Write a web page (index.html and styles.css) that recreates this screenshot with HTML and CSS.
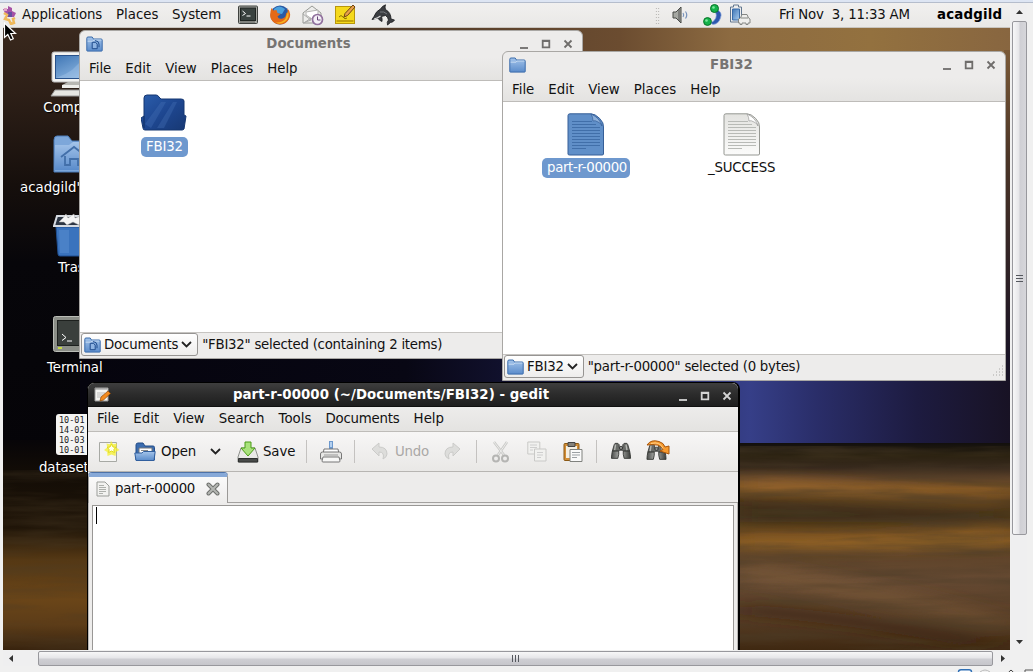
FILE: index.html
```
<!DOCTYPE html>
<html lang="en">
<head>
<meta charset="utf-8">
<title>Desktop</title>
<link rel="stylesheet" href="styles.css">
</head>
<body>
<svg class="defs" aria-hidden="true">
  <defs>
    <linearGradient id="gFolder" x1="0" y1="0" x2="0" y2="1"><stop offset="0" stop-color="#a4c4ea"/><stop offset="1" stop-color="#5b8ccb"/></linearGradient>
    <linearGradient id="gDark" x1="0" y1="0" x2="1" y2="1"><stop offset="0" stop-color="#2b5eac"/><stop offset=".5" stop-color="#1e4791"/><stop offset="1" stop-color="#173873"/></linearGradient>
    <linearGradient id="gScreen" x1="0" y1="0" x2="1" y2="1"><stop offset="0" stop-color="#3f76b5"/><stop offset="1" stop-color="#a9cdf0"/></linearGradient>
    <linearGradient id="gPaper" x1="0" y1="0" x2="0" y2="1"><stop offset="0" stop-color="#e3e3e0"/><stop offset="1" stop-color="#fbfbfa"/></linearGradient>
    <linearGradient id="gTube" x1="0" y1="0" x2="1" y2="0"><stop offset="0" stop-color="#4a4c4a"/><stop offset=".45" stop-color="#b4b6b2"/><stop offset="1" stop-color="#3b3d3a"/></linearGradient>
  </defs>
  <symbol id="folder" viewBox="0 0 17 16">
    <path d="M.8 14.500V2.200Q.8 1 2 1h4.200l1.300 2h7.600q1.100 0 1.100 1.100v10.400q0 .6-.6.6H1.400q-.6 0-.6-.6z" fill="url(#gFolder)" stroke="#3b6cab"/>
    <path d="M1.600 5.200H7l1-1.200h7.400" fill="none" stroke="#d3e3f6" stroke-width=".8"/>
  </symbol>
  <symbol id="folder-doc" viewBox="0 0 17 16">
    <use href="#folder"/>
    <path d="M6.200 6.300h3.300l1.700 1.800v4.600h-5z" fill="#8fb5e3" stroke="#1f4c8d"/>
    <path d="M9 4.600q4 .2 4 3.600v3" fill="none" stroke="#1f4c8d"/>
  </symbol>
  <symbol id="binoculars" viewBox="0 0 24 22">
    <path d="M4.500 3l1-1.500h3L10 3v3h4V3l1.500-1.500h3l1 1.500 2 7h-7l-1-1h-3l-1 1h-7z" fill="#6a6c69" stroke="#3a3c39"/>
    <path d="M2.500 10h7v3.500l-1 4.500h-7l.3-4zM14.500 10h7l.7 4 .3 4h-7l-1-4.500z" fill="url(#gTube)" stroke="#343633"/>
    <path d="M6 3l-1 6M17.500 3l1 6" stroke="#b5b7b3" fill="none" stroke-width="1.500"/>
    <circle cx="12" cy="6.500" r="1.800" fill="#8f918d" stroke="#333"/>
  </symbol>
</svg>

<div class="viewer">
  <main class="desktop">
    <svg class="wallpaper" viewBox="3 3 1007 647" preserveAspectRatio="none">
      <defs>
        <filter id="soft" x="-20%" y="-50%" width="140%" height="200%"><feGaussianBlur stdDeviation="18 6"/></filter>
        <filter id="grain" x="0" y="0" width="100%" height="100%"><feTurbulence type="fractalNoise" baseFrequency=".008 .09" numOctaves="4" seed="8"/><feColorMatrix values="0 0 0 0 .07  0 0 0 0 .045  0 0 0 0 .02  2.4 0 0 0 -.9"/></filter>
        <linearGradient id="sky" x1="0" y1="0" x2="0" y2="1"><stop offset="0" stop-color="#3e2c20"/><stop offset=".14" stop-color="#2d1f17"/><stop offset=".28" stop-color="#160f0c"/><stop offset=".4" stop-color="#07060a"/><stop offset="1" stop-color="#030206"/></linearGradient>
        <linearGradient id="top" x1="0" y1="0" x2="1" y2="0"><stop offset="0" stop-color="#3c2b1f"/><stop offset=".3" stop-color="#4d3827"/><stop offset=".58" stop-color="#6b4c30"/><stop offset=".7" stop-color="#8d6b41"/><stop offset=".85" stop-color="#93713f"/><stop offset="1" stop-color="#886640"/></linearGradient>
        <linearGradient id="edge" x1="0" y1="0" x2="0" y2="1"><stop offset="0" stop-color="#7a5937"/><stop offset=".35" stop-color="#4b3527"/><stop offset="1" stop-color="#181224"/></linearGradient>
        <linearGradient id="blue" x1="0" y1="0" x2="1" y2="0"><stop offset="0" stop-color="#05040d"/><stop offset=".35" stop-color="#080714"/><stop offset=".48" stop-color="#131333"/><stop offset=".72" stop-color="#363f88"/><stop offset=".79" stop-color="#2a2e6a"/><stop offset=".9" stop-color="#1d1b40"/><stop offset="1" stop-color="#181224"/></linearGradient>
        <linearGradient id="ground" x1="0" y1="0" x2="0" y2="1">
          <stop offset="0" stop-color="#120f0d"/><stop offset=".06" stop-color="#2b2211"/><stop offset=".12" stop-color="#37291d"/><stop offset=".17" stop-color="#5e4229"/><stop offset=".22" stop-color="#7e5422"/><stop offset=".28" stop-color="#4f3718"/><stop offset=".36" stop-color="#4c371b"/><stop offset=".44" stop-color="#744d1f"/><stop offset=".48" stop-color="#7d5420"/><stop offset=".53" stop-color="#5e4328"/><stop offset=".66" stop-color="#664a33"/><stop offset=".85" stop-color="#583d25"/><stop offset="1" stop-color="#3f2811"/>
        </linearGradient>
        <linearGradient id="leftground" x1="0" y1="0" x2="0" y2="1"><stop offset="0" stop-color="#070508"/><stop offset=".15" stop-color="#120c06"/><stop offset=".42" stop-color="#201508"/><stop offset=".57" stop-color="#553814"/><stop offset=".76" stop-color="#6a4518"/><stop offset=".88" stop-color="#5c3c18"/><stop offset="1" stop-color="#38230e"/></linearGradient>
      </defs>
      <rect x="3" y="3" width="1007" height="647" fill="url(#sky)"/>
      <rect x="80" y="3" width="930" height="60" fill="url(#top)"/>
      <rect x="1004" y="50" width="6" height="310" fill="url(#edge)"/>
      <rect x="80" y="355" width="930" height="88" fill="url(#blue)"/>
      <rect x="735" y="443" width="275" height="207" fill="url(#ground)"/>
      <rect x="3" y="440" width="90" height="210" fill="url(#leftground)"/>
      <g filter="url(#soft)">
        <path d="M735 476Q830 480 900 488T1010 492V502Q880 500 735 490z" fill="#9c6a2e" opacity=".7"/>
        <path d="M735 502Q840 505 1010 514V520Q860 524 735 522z" fill="#33240f" opacity=".6"/>
        <path d="M735 538Q880 540 1010 526V546Q860 552 735 549z" fill="#966626" opacity=".75"/>
        <path d="M735 560Q880 580 1010 620V632Q860 600 735 580z" fill="#7d5b3a" opacity=".55"/>
        <path d="M735 604Q860 610 1010 645H960Q840 622 735 615z" fill="#3a230f" opacity=".7"/>
      </g>
      <rect x="735" y="446" width="275" height="204" filter="url(#grain)" opacity=".5"/>
      <rect x="3" y="470" width="90" height="180" filter="url(#grain)" opacity=".35"/>
    </svg>

    <header class="panel">
      <nav class="panel-menu">
        <svg class="distro" width="14" height="20" viewBox="0 0 14 20"><path d="M0 4h5V1l4 2v3l4 2-2 4H4z" fill="#a552a6"/><path d="M5 7h4v5H5z" fill="#674fa0"/><path d="M1 8l3 2-2 4 4 1 2 4 3-1-1-4 2-1" stroke="#f0b95a" stroke-width="2.500" fill="none"/><path d="M1 3h3v3H1z" fill="#e3a8c8"/></svg>
        <span class="m-app">Applications</span><span class="m-pla">Places</span><span class="m-sys">System</span>
      </nav>
      <div class="launchers">
        <svg width="22" height="20" viewBox="0 0 22 20"><rect x="1.500" y="1" width="19" height="17.500" rx="1" fill="#a5a7a2" stroke="#3f423f"/><rect x="3.500" y="3" width="15" height="12.500" fill="#39423f" stroke="#202522"/><path d="M5.500 6l3 2.500-3 2M9.500 11h4" stroke="#fff" fill="none"/><path d="M3 17h15" stroke="#5a5c58"/></svg>
        <svg width="22" height="22" viewBox="0 0 22 22"><circle cx="11" cy="11" r="9.500" fill="#2a5aa5"/><path d="M5 5q5-5 11 0l-3 5-8-1z" fill="#4aa0dd"/><path d="M2.500 4l2 2.500 3-.5 1 3 3 1-3 2.500q1 3 5 2 4-1 3.500-6l2 2-.5-6q4 4 2 9.500-3 6.500-9.500 6.500T1.500 14Q.5 9 2.500 4z" fill="#e66a17"/><path d="M19 7q2.500 7-3.500 11-5 3-9 .5 7 .5 10-4z" fill="#f6b321"/></svg>
        <svg width="24" height="22" viewBox="0 0 24 22"><path d="M2 9l9-7 9 7v10H2z" fill="#ededeb" stroke="#989a96"/><path d="M5 8l12-2v7l-6 2-6-4z" fill="#fff" stroke="#b5b5b3"/><path d="M2 10l8 6-8 3M3 19l7-5" stroke="#aaa" fill="none"/><circle cx="16.500" cy="15.500" r="5" fill="#f4eff6" stroke="#90709d" stroke-width="1.700"/><path d="M16.500 12.500v3.500h3" stroke="#66477a" fill="none"/></svg>
        <svg width="22" height="22" viewBox="0 0 22 22"><rect x="0.500" y="2.500" width="19" height="17" fill="#f5d91c" stroke="#b8970b"/><path d="M1.500 17h17" stroke="#c4a30b" stroke-width="2"/><path d="M4 13q2-3 4 0t4 1" stroke="#8c7300" fill="none"/><path d="M9 13l1-3.500L18 1l2 2-7.500 8.500z" fill="#e8a04b" stroke="#6d4314"/></svg>
        <svg class="dolphin" width="24" height="22" viewBox="0 0 24 22"><path d="M1 15.500l2-3Q5 7 9.500 5 11 2 14.500.8 13.500 3 14.500 5.500 20 8.500 20 15l3.500 1q-1.500 2.500-4 2.500L16.500 21q-1-3 1-5-.5-3-3-4.500l-4 1q1 3 .5 5-3-1-4-3.500z" fill="#3b3d41" stroke="#17181a" stroke-width=".8"/><path d="M3 15q4-1 6.500-3" stroke="#d9d9d9" fill="none" stroke-width="1.200"/><path d="M9 8q4-1 7 2" stroke="#777a80" fill="none"/></svg>
      </div>
      <div class="tray">
        <span class="grip"></span>
        <svg class="vol" width="18" height="20" viewBox="0 0 18 20"><path d="M1 7h3l5-5v16l-5-5H1z" fill="#a5a7a2" stroke="#464845"/><path d="M7 4v12" stroke="#555"/><path d="M11 8q1.500 2 0 4M13.500 6.500q2.500 3.500 0 7" stroke="#7792bb" fill="none" stroke-width="1.200"/></svg>
        <svg class="net" width="20" height="22" viewBox="0 0 20 22"><path d="M13 5q7 3 4.500 9-2 6-7.500 6.500l-2.500-1.500q8-4 5-11z" fill="#2e58ad" stroke="#8aa6dc" stroke-width=".7"/><circle cx="11.500" cy="4.500" r="4" fill="#14b24a" stroke="#087527"/><circle cx="4.500" cy="17.500" r="3.900" fill="#14b24a" stroke="#087527"/><circle cx="10.500" cy="3.500" r="1.300" fill="#7bea9b"/><circle cx="3.500" cy="16.500" r="1.300" fill="#7bea9b"/></svg>
        <svg class="bat" width="22" height="22" viewBox="0 0 22 22"><path d="M4.500 1h5v2h3v15h-11V3h3z" fill="#eee" stroke="#62778f"/><path d="M3.500 5h7v11h-7z" fill="url(#gScreen)" stroke="#386ba8"/><path d="M9.500 19v-4l2-1 1.500-3.500h5L19.500 14l1.500 1v4h-2v1.500h-2V19h-4v1.500h-2V19z" fill="#efefed" stroke="#858784"/><path d="M12 14h7" stroke="#858784"/></svg>
        <span class="clock">Fri Nov&nbsp; 3, 11:33 AM</span>
        <b class="user">acadgild</b>
      </div>
    </header>

    <div class="launcher-icon at-computer">
      <svg width="60" height="50" viewBox="0 0 60 50"><rect x="2" y="2" width="56" height="30" rx="2" fill="#f3f3f1" stroke="#bbb"/><rect x="5.500" y="5.500" width="49" height="23" fill="url(#gScreen)" stroke="#28518a"/><path d="M6 28Q25 22 34 6H54V28z" fill="#b9d5f2" opacity=".3"/><path d="M18 32h26v3H12z" fill="#b8b8b3"/><path d="M12 35h36v3H12z" fill="#eeeeeb"/><path d="M5 40h50l4 6H1z" fill="#e6e6e2" stroke="#999"/></svg>
      <span>Computer</span>
    </div>
    <div class="launcher-icon at-home">
      <svg width="46" height="40" viewBox="0 0 46 40"><path d="M1 37V5q0-4 3-4h11l4 5h24q2 0 2 2v29z" fill="#7da7da" stroke="#4c7db9"/><path d="M2 10h14l4-3h24v28H2z" fill="url(#gFolder)"/><path d="M8 22l13-10 13 10M12 21v9h5v-6h8v6h5v-9" stroke="#426fa9" stroke-width="1.800" fill="none"/></svg>
      <span>acadgild's Home</span>
    </div>
    <div class="launcher-icon at-trash">
      <svg width="46" height="46" viewBox="0 0 46 46"><path d="M3 15h40l-2 27q0 2-2 2H7q-2 0-2-2z" fill="#3a73bd" stroke="#1f4f91"/><path d="M6 18l1 23h9V18z" fill="#5f92d3" opacity=".45"/><path d="M4 4h38l3 10H1z" fill="#2d3644" stroke="#d6dbe2" stroke-width="2"/><path d="M6 10l4-4 3-4 2 4 6-4 1 4 8-3 3 5 7 0-4 4-6-2-4 3-6-3-6 3-3-3z" fill="#f4f4f4" stroke="#aaa" stroke-width=".5"/></svg>
      <span>Trash</span>
    </div>
    <div class="launcher-icon at-terminal">
      <svg width="44" height="36" viewBox="0 0 44 36"><rect x=".5" y=".5" width="43" height="35" rx="2" fill="#8b8e87" stroke="#babdb6"/><rect x="4.500" y="4.500" width="35" height="25" fill="#3a3f3c" stroke="#1d201e"/><path d="M9 18l4 3.500-4 3M14 25h5" stroke="#fff" fill="none"/><path d="M5 32h4" stroke="#c5d844" stroke-width="2"/></svg>
      <span>Terminal</span>
    </div>
    <div class="launcher-icon at-dataset">
      <div class="sheet">10-01<br>14-02<br>10-03<br>10-01</div>
      <span>dataset</span>
    </div>

    <section class="window documents">
      <div class="titlebar"><svg class="app" width="17" height="16"><use href="#folder-doc"/></svg><b>Documents</b>
        <svg class="controls" width="54" height="12" viewBox="0 0 54 12"><path d="M1 10h8" /><path d="M23.700 2.700h6.600v6.600h-6.600zM23 3.200h8"/><path d="M45.500 2.500l7 7M52.500 2.500l-7 7"/></svg></div>
      <nav class="menubar"><span>File</span><span>Edit</span><span>View</span><span>Places</span><span>Help</span></nav>
      <div class="files">
        <div class="file f-fbi"><svg width="46" height="37" viewBox="0 0 46 37"><path d="M3 34V4q0-3 3-3h9q2 0 3 2l2 2h20q3 0 3 2v14l2 1-2 13q-1 1-2 1H4q-2 0-2-2L0 24l3-2z" fill="url(#gDark)" stroke="#153671"/><path d="M4 30L20 8h5L10 34zM16 34L32 8h4L23 34z" fill="#4774b7" opacity=".35"/></svg><span class="selected">FBI32</span></div>
      </div>
      <footer class="status"><span class="crumb"><svg width="17" height="16"><use href="#folder-doc"/></svg><span class="narrow">Documents</span><svg width="11" height="7" viewBox="0 0 11 7"><path d="M1 1l4.500 4.500L10 1" class="chev"/></svg></span><span class="msg">"FBI32" selected (containing 2 items)</span></footer>
    </section>

    <section class="window fbi">
      <div class="titlebar"><svg class="app" width="17" height="16"><use href="#folder"/></svg><b>FBI32</b>
        <svg class="controls" width="54" height="12" viewBox="0 0 54 12"><path d="M1 10h8" /><path d="M23.700 2.700h6.600v6.600h-6.600zM23 3.200h8"/><path d="M45.500 2.500l7 7M52.500 2.500l-7 7"/></svg></div>
      <nav class="menubar"><span>File</span><span>Edit</span><span>View</span><span>Places</span><span>Help</span></nav>
      <div class="files">
        <div class="file f-part"><svg width="38" height="43" viewBox="0 0 38 43"><path d="M1 2.500Q1 .8 3 .8h21q4 0 8.500 4.500T36.500 14v27q0 1-1.500 1H2.500Q1 42 1 41z" fill="#608fc8" stroke="#365f98"/><path d="M5 8.500h20M5 11.500h24M5 14.500h28M5 17.500h28M5 20.500h28M5 23.500h28M5 26.500h28M5 29.500h28M5 32.500h28M5 35.500h14" stroke="#416fa9"/><path d="M24 1q2 3 2 7 2-1 5 1 3 1 4 4-2-8-11-12z" fill="#8db0da" stroke="#365f98" stroke-width=".7"/></svg><span class="selected">part-r-00000</span></div>
        <div class="file f-success"><svg width="38" height="43" viewBox="0 0 38 43"><path d="M1 2.500Q1 .8 3 .8h21q4 0 8.500 4.500T36.500 14v27q0 1-1.500 1H2.500Q1 42 1 41z" fill="url(#gPaper)" stroke="#959792"/><path d="M5 8.500h20M5 11.500h24M5 14.500h28M5 17.500h28M5 20.500h28M5 23.500h28M5 26.500h28M5 29.500h28M5 32.500h28M5 35.500h14" stroke="#b8bab6"/><path d="M24 1q2 3 2 7 2-1 5 1 3 1 4 4-2-8-11-12z" fill="#fff" stroke="#999" stroke-width=".7"/></svg><span>_SUCCESS</span></div>
      </div>
      <footer class="status"><span class="crumb"><svg width="17" height="16"><use href="#folder"/></svg><span class="narrow">FBI32</span><svg width="11" height="7" viewBox="0 0 11 7"><path d="M1 1l4.500 4.500L10 1" class="chev"/></svg></span><span class="msg">"part-r-00000" selected (0 bytes)</span>
        <svg class="resize" width="12" height="12" viewBox="0 0 12 12"><path d="M10 1h1M7 4h1M10 4h1M4 7h1M7 7h1M10 7h1M1 10h1M4 10h1M7 10h1M10 10h1" stroke="#a9a8a6"/></svg></footer>
    </section>

    <section class="window gedit">
      <div class="titlebar"><svg class="app" width="17" height="17" viewBox="0 0 17 17"><path d="M1 2h13v13H1z" fill="#f4f4f2" stroke="#999"/><path d="M2 1v3M4 1v3M6 1v3M8 1v3M10 1v3M12 1v3" stroke="#777" stroke-width=".8"/><path d="M3 7h8M3 9h6M3 11h4" stroke="#bbb"/><path d="M6 15l1-4 7-6 2.500 2.500-7 6.500z" fill="#f38a1e" stroke="#8c4708" stroke-width=".7"/></svg><b>part-r-00000 (~/Documents/FBI32) - gedit</b>
        <svg class="controls" width="54" height="12" viewBox="0 0 54 12"><path d="M1 10h8" /><path d="M23.700 2.700h6.600v6.600h-6.600zM23 3.200h8"/><path d="M45.500 2.500l7 7M52.500 2.500l-7 7"/></svg></div>
      <nav class="menubar"><span>File</span><span>Edit</span><span>View</span><span>Search</span><span>Tools</span><span class="narrow">Documents</span><span>Help</span></nav>
      <div class="toolbar">
        <svg class="t-new" width="22" height="24" viewBox="0 0 22 24"><path d="M1.500 2.500h17v19h-17z" fill="#f5f5f3" stroke="#a7a9a4"/><path d="M13 .8l2 3.500 4-.8-.6 4L21.500 10l-3.500 2-.5 4-4-1.500-4 1.500-.3-4L6 10l3.200-2.500L8.500 3.500l3.500.8z" fill="#f4f02c" opacity=".75"/><path d="M13.500 4l1.500 3 3 .4-2.200 2 .6 3.100-2.900-1.500-2.900 1.500.6-3.100-2.200-2 3-.4z" fill="#fffff0" stroke="#e4dc16"/></svg>
        <svg class="t-open" width="22" height="20" viewBox="0 0 22 20"><path d="M2 18V3q0-2 2-2h5l2 3h8q1.500 0 1.500 1.500V18z" fill="#3b6caf" stroke="#234c88"/><path d="M5 6h13v7H5z" fill="#fff" stroke="#777"/><path d="M7 8.500h7" stroke="#888"/><path d="M.8 11H8l1.500-1.500h11.700L20 18.500H2z" fill="url(#gFolder)" stroke="#315f9e"/></svg>
        <span class="l-open">Open</span>
        <svg class="t-drop" width="11" height="7" viewBox="0 0 11 7"><path d="M1 1l4.500 4.500L10 1" class="chev"/></svg>
        <svg class="t-save" width="22" height="22" viewBox="0 0 22 22"><path d="M4 7h14l3 9v5H1v-5z" fill="#e9e9e7" stroke="#8e908c"/><path d="M1.500 17.500h19V21h-19z" fill="#484b49" stroke="#2e302f"/><path d="M8 1h6v6h4l-7 8-7-8h4z" fill="#a9e27c" stroke="#4b9b17"/></svg>
        <span class="l-save">Save</span>
        <i class="sep s1"></i>
        <svg class="t-print" width="24" height="24" viewBox="0 0 24 24"><path d="M12 1v8" stroke="#6c98cd" stroke-width="4"/><path d="M12 2v5" stroke="#b4d0ef" stroke-width="2"/><path d="M5 9h14l1 5H4z" fill="#fff" stroke="#777"/><path d="M1.500 14q0-2 2-2h17q2 0 2 2v5h-21z" fill="#e7e7e5" stroke="#777"/><path d="M4 17h16l1 4q0 1-1 1H4q-1 0-1-1z" fill="#f8f8f7" stroke="#777"/><path d="M5 15h14" stroke="#999"/></svg>
        <i class="sep s2"></i>
        <svg class="t-undo" width="18" height="20" viewBox="0 0 18 20"><path d="M1 7l7-6v4q8 0 8 7 0 3-4 5 2-7-4-7v4z" fill="#dddddb" stroke="#cbcbc9"/></svg>
        <span class="l-undo">Undo</span>
        <svg class="t-redo" width="18" height="20" viewBox="0 0 18 20"><path d="M17 7l-7-6v4q-8 0-8 7 0 3 4 5-2-7 4-7v4z" fill="#dddddb" stroke="#cbcbc9"/></svg>
        <i class="sep s3"></i>
        <svg class="t-cut" width="20" height="22" viewBox="0 0 20 22"><path d="M3 1l10 13M16 1L7 14" stroke="#c9c9c7" stroke-width="2.500"/><path d="M3 1l10 13M16 1L7 14" stroke="#ececea"/><circle cx="5" cy="17.500" r="3" fill="none" stroke="#b5b5b3" stroke-width="2"/><circle cx="14" cy="17.500" r="3" fill="none" stroke="#b5b5b3" stroke-width="2"/></svg>
        <svg class="t-copy" width="20" height="21" viewBox="0 0 20 21"><g fill="#f1f1ef" stroke="#c9c9c7"><path d="M.8 1h12v12H.8z"/><path d="M7.500 8h11.500v12H7.500z"/></g><path d="M3 4h7M3 6.500h7M3 9h3M10 11.500h6M10 14h6M10 16.500h4" stroke="#cecece"/></svg>
        <svg class="t-paste" width="20" height="22" viewBox="0 0 20 22"><rect x="1" y="2.500" width="15" height="17" rx="1" fill="#d28d35" stroke="#8b5914"/><path d="M3 5h11v12H3z" fill="#f5efe2"/><path d="M5 1.500h7v4H5z" fill="#85827b" stroke="#444"/><path d="M7 8.500h12v12H7z" fill="#fafafa" stroke="#80827e"/><path d="M9 11.500h8M9 14h8M9 16.500h5" stroke="#9ba0a4"/></svg>
        <i class="sep s4"></i>
        <svg class="t-find" width="24" height="20"><use href="#binoculars"/></svg>
        <svg class="t-replace" width="25" height="24" viewBox="0 0 25 24"><svg y="3" width="23" height="20"><use href="#binoculars"/></svg><path d="M2 5q4-6 12-3.500 5 1.500 6 5.500l4-1v8l-9-3 3-1.500Q15 3 2 5z" fill="#f79a2f" stroke="#a9560b"/><path d="M6 3.500q9-2.500 12 5" stroke="#fdd08b" fill="none"/></svg>
      </div>
      <div class="tabs"><div class="tab"><svg width="14" height="16" viewBox="0 0 14 16"><path d="M1 1h8l4 4v10H1z" fill="#f2f2f0" stroke="#9b9d99"/><path d="M3 4.500h5M3 6.500h7M3 8.500h7M3 10.500h7M3 12.500h4" stroke="#aeb0ac"/></svg><span class="digits">part-r-00000</span><svg class="x" width="14" height="14" viewBox="0 0 14 14"><path d="M2.500 2.500l9 9M11.500 2.500l-9 9" stroke="#6e706d" stroke-width="4" stroke-linecap="round"/><path d="M2.500 2.500l9 9M11.500 2.500l-9 9" stroke="#b4b6b2" stroke-width="2" stroke-linecap="round"/></svg></div></div>
      <div class="editor"><div class="page"><i class="caret"></i></div></div>
    </section>

    <svg class="pointer" width="14" height="20" viewBox="0 0 14 20"><path d="M1.500 1v14.500l3.300-3L7.500 18l2.800-1.300L7.800 11.500h4.700z" fill="#000" stroke="#fff" stroke-width="1.200"/></svg>
  </main>

  <aside class="vscroll">
    <svg width="7" height="4" viewBox="0 0 7 4"><path d="M0 4l3.500-4L7 4z" fill="#333"/></svg>
    <div class="vthumb"><i></i><i></i><i></i></div>
    <svg class="down" width="7" height="4" viewBox="0 0 7 4"><path d="M0 0h7L3.500 4z" fill="#333"/></svg>
  </aside>
  <div class="hscroll">
    <svg class="left" width="4" height="7" viewBox="0 0 4 7"><path d="M4 0v7L0 3.500z" fill="#333"/></svg>
    <div class="hthumb"><i></i><i></i><i></i></div>
    <svg class="right" width="4" height="7" viewBox="0 0 4 7"><path d="M0 0v7l4-3.500z" fill="#333"/></svg>
  </div>
  <svg class="tasktray" width="80" height="3" viewBox="0 0 80 3"><path d="M5.500 3Q5.500.8 8 .8h8q2.500 0 2.500 2.200" fill="#fff" stroke="#2f6fb5" stroke-width="1.500"/><path d="M27 3q5-4 10 0" stroke="#bbb" fill="none"/><path d="M56 3q2-3.500 4 0" stroke="#444" fill="none"/><path d="M72 3V1h8" stroke="#555" fill="none"/></svg>
</div>
</body>
</html>
```
FILE: styles.css
```
* { box-sizing: border-box; }
body { margin: 0; overflow: hidden; font: 13.33px/16px "DejaVu Sans", sans-serif; color: #111; }
svg { display: block; flex: none; }
span, b { white-space: nowrap; }
.defs { position: absolute; width: 0; height: 0; }

.viewer { display: grid; grid-template: 647px 17px 5px / 1007px 23px; width: 1033px; height: 672px; padding: 3px 0 0 3px; background: #f0f0f0; box-shadow: inset 0 2px #dde5f3, inset 0 3px #b5bdcc; }
.desktop { position: relative; overflow: hidden; background: #080608; }
.wallpaper { position: absolute; inset: 0; width: 1007px; height: 647px; }

/* Top panel */
.panel { position: relative; display: flex; align-items: center; justify-content: space-between; height: 25px; background: linear-gradient(#f1f0ef, #e9e8e6); border-bottom: 1px solid #c9c5bf; }
.panel-menu { display: flex; align-items: center; height: 24px; }
.panel-menu span { margin-right: 14px; }
.distro { margin-right: 5px; }
.m-app { width: 80px; letter-spacing: -.1px; }
.m-pla { width: 42px; }
.m-sys { width: 49px; letter-spacing: -.1px; }
.launchers { display: flex; align-items: center; gap: 10px; margin-right: auto; margin-left: 2px; }
.dolphin { margin-left: 4px; }
.tray { display: flex; align-items: center; }
.grip { width: 5px; height: 17px; margin-right: 12px; background: radial-gradient(circle, #a9a7a4 .6px, transparent .8px) 0 0 / 2.500px 3px; }
.vol { margin-right: 13px; }
.net { margin-right: 6px; }
.bat { margin-right: 28px; }
.clock { width: 131px; margin-right: 27px; letter-spacing: -.2px; }
.user { width: 65px; margin-right: 8px; color: #000; letter-spacing: .2px; }

/* Desktop launchers */
.launcher-icon { position: absolute; display: flex; flex-direction: column; color: #fff; text-shadow: 1px 1px 1px #000; }
.launcher-icon span { text-align: center; }
.at-computer { left: 40px; top: 47px; }
.at-computer svg { margin-left: 7px; }
.at-home { left: 17px; top: 132px; }
.at-home svg { margin: 0 0 5px 33px; }
.at-trash { left: 50px; top: 209px; }
.at-trash span { margin: 2px 0 0 5px; text-align: left; }
.at-terminal { left: 44px; top: 313px; }
.at-terminal svg { margin: 0 0 8px 6px; }
.at-terminal span { letter-spacing: -.1px; }
.at-dataset { left: 36px; top: 411px; }
.at-dataset span { text-align: left; letter-spacing: -.1px; }
.sheet { width: 40px; height: 41px; margin: 0 0 5px 17px; padding: 1px 3px; border-radius: 3px; background: #f4f4f2; color: #222; font: 8.500px/10px "DejaVu Sans Mono", monospace; text-shadow: none; }

/* Windows */
.window { position: absolute; display: flex; flex-direction: column; width: 503px; height: 329px; border: 1px solid #a9a7a4; border-radius: 6px 6px 0 0; background: #edeceb; }
.documents { left: 76px; top: 27px; width: 504px; }
.fbi { left: 499px; top: 48px; width: 504px; height: 330px; }
.titlebar { position: relative; display: flex; align-items: center; height: 26px; flex: none; padding-left: 6px; color: #767472; }
.titlebar b { position: absolute; inset: 5px 45px 0 0; text-align: center; }
.controls { position: absolute; right: 9px; top: 7px; fill: none; stroke: #6f6d6b; stroke-width: 1.800; }
.menubar { display: flex; gap: 14px; align-items: center; height: 24px; flex: none; padding-left: 9px; border-bottom: 1px solid #bebcb9; background: linear-gradient(#edeceb, #e4e3e1); }
.files { position: relative; flex: 1; background: #fff; }
.file { position: absolute; display: flex; flex-direction: column; align-items: center; }
.file span { padding: 2px 5px; }
.file .selected { border-radius: 5px; background: #6e98ce; color: #fff; }
.f-fbi { left: 61px; top: 13px; gap: 6px; }
.f-fbi span { letter-spacing: -.2px; }
.f-part { left: 39px; top: 11px; gap: 2px; }
.f-part span { width: 88px; }
.f-part span, .digits { letter-spacing: -.33px; }
.f-success { left: 200px; top: 11px; gap: 2px; }
.f-success span { letter-spacing: -.2px; }
.status { position: relative; display: flex; align-items: center; height: 26px; flex: none; padding: 0 0 2px 1px; border-top: 1px solid #c6c4c1; }
.crumb { display: flex; align-items: center; gap: 3px; height: 23px; padding: 0 5px 0 2px; border: 1px solid #969492; border-radius: 3px; background: linear-gradient(#fff, #eeedec); }
.narrow { letter-spacing: -.2px; }
.msg { margin-left: 4px; letter-spacing: -.25px; }
.chev { fill: none; stroke: #222; stroke-width: 1.800; }
.resize { position: absolute; right: 1px; bottom: 3px; }

/* Editor window */
.gedit { left: 84px; top: 379px; width: 653px; height: 280px; border: 1px solid #000; border-right-width: 2px; border-radius: 7px 7px 0 0; }
.gedit .titlebar { height: 24px; border-bottom: 1px solid #101010; border-radius: 6px 6px 0 0; background: linear-gradient(#3e3e3e, #2d2d2d 45%, #1e1e1e); color: #fff; }
.gedit .titlebar b { inset: 4px 44px 0 0; letter-spacing: .05px; }
.gedit .controls { top: 7px; right: 6px; stroke: #d4d4d4; }
.gedit .menubar { height: 25px; padding-left: 9px; }
.toolbar { display: flex; align-items: center; height: 40px; flex: none; padding-left: 10px; border-bottom: 1px solid #b7b5b2; background: linear-gradient(#f7f6f6, #e9e8e6); }
.t-open { margin-left: 14px; }
.l-open { width: 35px; margin-left: 5px; letter-spacing: -.1px; }
.t-drop { margin-left: 14px; }
.t-save { margin-left: 16px; }
.l-save { width: 32px; margin-left: 4px; letter-spacing: -.1px; }
.sep { width: 1px; height: 23px; background: #c4c2c0; }
.s1 { margin-left: 11px; }
.t-print { margin-left: 12px; }
.s2 { margin-left: 11px; }
.t-undo { margin-left: 16px; }
.l-undo { width: 34px; margin-left: 6px; color: #aaa8a6; letter-spacing: -.2px; }
.t-redo { margin-left: 14px; }
.s3 { margin-left: 15px; }
.t-cut { margin-left: 14px; }
.t-copy { margin-left: 16px; }
.t-paste { margin-left: 16px; }
.s4 { margin-left: 13px; }
.t-find { margin-left: 12px; }
.t-replace { margin-left: 12px; }
.tabs { height: 31px; flex: none; padding-top: 1px; border-bottom: 1px solid #a3a19f; }
.tab { display: flex; align-items: center; width: 140px; height: 30px; padding: 0 7px 2px; border: 1px solid #9b9997; border-top: 4px solid #87a9d8; border-bottom: 0; border-radius: 4px 4px 0 0; background: linear-gradient(#fafafa, #edeceb); box-shadow: 0 -1px #4d72a8; }
.tab span { width: 81px; margin: 0 11px 0 5px; }
.editor { flex: 1; padding: 2px 3px 0; border: solid #b8b6b4; border-width: 0 1px; }
.page { height: 100%; padding: 1px 3px; border: 1px solid #999795; background: #fff; }
.caret { display: block; width: 1px; height: 17px; background: #000; }

.pointer { position: absolute; left: 0; top: 19px; }

/* Viewer scrollbars */
.vscroll { display: flex; flex-direction: column; align-items: center; width: 16px; height: 647px; margin-left: 1px; padding: 7px 0 6px; background: #efeff0; }
.vthumb { display: flex; flex-direction: column; align-items: center; justify-content: center; gap: 2px; width: 15px; height: 514px; margin-top: 7px; border: 1px solid #98989d; border-radius: 2px; background: linear-gradient(90deg, #f7f7f8, #e5e5e8 48%, #cfcfd4 52%, #d6d6da); }
.vthumb i { width: 7px; height: 1px; background: #55585e; }
.down { margin-top: auto; }
.hscroll { display: flex; align-items: center; width: 1007px; height: 15px; margin-top: 1px; background: #efeff0; }
.left { margin-left: 6px; }
.hthumb { display: flex; align-items: center; justify-content: center; gap: 2px; width: 955px; height: 15px; margin-left: 25px; border: 1px solid #98989d; border-radius: 2px; background: linear-gradient(#f7f7f8, #e5e5e8 48%, #cfcfd4 52%, #c6c6cb); }
.hthumb i { width: 1px; height: 7px; background: #55585e; }
.right { margin-left: 8px; }
.tasktray { position: absolute; left: 953px; top: 669px; }
```
